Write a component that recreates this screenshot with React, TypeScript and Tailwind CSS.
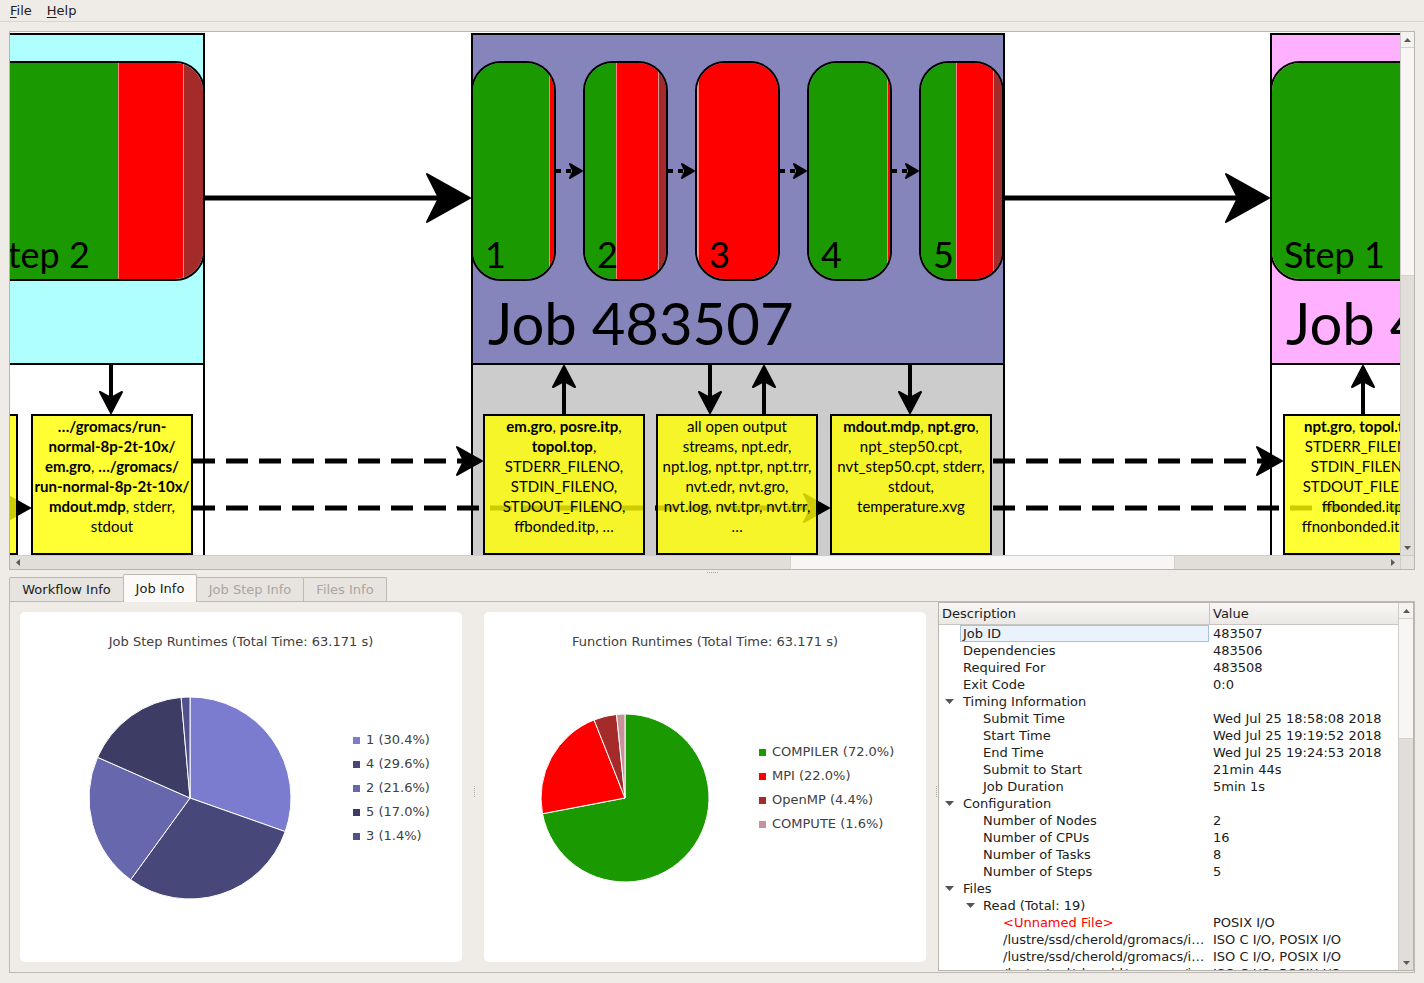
import React from 'react';

const G = '#1a9900';
const R = '#ff0000';
const BR = '#a52a2a';

type Seg = { w?: number; c: string };

function StepRect({ left, width, segs, label }: { left: number; width: number; segs: Seg[]; label: string }) {
  return (
    <div
      className="absolute top-[29px] h-[220px] rounded-[30px] border-2 border-black overflow-hidden flex"
      style={{ left, width }}
    >
      {segs.map((s, i) => (
        <div
          key={i}
          className={i > 0 ? 'h-full border-l border-[#ffffff80]' : 'h-full'}
          style={s.w === undefined ? { backgroundColor: s.c, flex: '1 1 0%' } : { backgroundColor: s.c, width: s.w, flexShrink: 0 }}
        />
      ))}
      <div className="absolute left-[12px] top-[173px] text-[36px] leading-none text-black whitespace-nowrap">{label}</div>
    </div>
  );
}

function FileBox({ left, lines }: { left: number; lines: React.ReactNode[] }) {
  return (
    <div
      className="absolute top-[382px] w-[162px] h-[141px] border-2 border-black bg-[#ffff00cc] flex flex-col items-center text-[15px] leading-[20px] text-black"
      style={{ left }}
    >
      {lines.map((l, i) => (
        <div key={i} className="whitespace-nowrap">
          {l}
        </div>
      ))}
    </div>
  );
}

type Dir = 'r' | 'l' | 'u' | 'd';
function headPts(tx: number, ty: number, dir: Dir, L: number, W: number) {
  const u = dir === 'r' ? [1, 0] : dir === 'l' ? [-1, 0] : dir === 'd' ? [0, 1] : [0, -1];
  const p = dir === 'r' || dir === 'l' ? [0, 1] : [1, 0];
  const loc = [
    [0, 0],
    [-L, -W],
    [-0.72 * L, 0],
    [-L, W],
  ];
  return loc.map(([a, b]) => `${tx + a * u[0] + b * p[0]},${ty + a * u[1] + b * p[1]}`).join(' ');
}

function Head({ x, y, dir, L, W }: { x: number; y: number; dir: Dir; L: number; W: number }) {
  return <polygon points={headPts(x, y, dir, L, W)} fill="black" stroke="black" strokeWidth={2} strokeLinejoin="round" />;
}

function Arrows() {
  const stepLefts = [461, 573, 685, 797, 909];
  const vert: { x: number; dir: Dir }[] = [
    { x: 101, dir: 'd' },
    { x: 554, dir: 'u' },
    { x: 700, dir: 'd' },
    { x: 754, dir: 'u' },
    { x: 900, dir: 'd' },
    { x: 1353, dir: 'u' },
  ];
  return (
    <svg className="absolute left-0 top-0" width={1390} height={523}>
      <line x1={195} y1={166} x2={432} y2={166} stroke="black" strokeWidth={5} />
      <Head x={460} y={166} dir="r" L={43} W={24} />
      <line x1={995} y1={166} x2={1231} y2={166} stroke="black" strokeWidth={5} />
      <Head x={1259} y={166} dir="r" L={43} W={24} />
      {stepLefts.slice(0, 4).map((l, i) => (
        <g key={i}>
          <line x1={l + 85} y1={139} x2={stepLefts[i + 1] - 9} y2={139} stroke="black" strokeWidth={4} strokeDasharray="5 5" />
          <Head x={stepLefts[i + 1] - 1} y={139} dir="r" L={12} W={7} />
        </g>
      ))}
      {vert.map((v, i) =>
        v.dir === 'd' ? (
          <g key={i}>
            <line x1={v.x} y1={333} x2={v.x} y2={367} stroke="black" strokeWidth={4} />
            <Head x={v.x} y={381} dir="d" L={21} W={11} />
          </g>
        ) : (
          <g key={i}>
            <line x1={v.x} y1={382} x2={v.x} y2={348} stroke="black" strokeWidth={4} />
            <Head x={v.x} y={334} dir="u" L={21} W={11} />
          </g>
        )
      )}
      <line x1={183} y1={429} x2={455} y2={429} stroke="black" strokeWidth={5} strokeDasharray="22 11" />
      <Head x={472} y={429} dir="r" L={25} W={14} />
      <line x1={183} y1={476} x2={802} y2={476} stroke="black" strokeWidth={5} strokeDasharray="22 11" />
      <Head x={819} y={476} dir="r" L={25} W={14} />
      <line x1={-200} y1={476} x2={3} y2={476} stroke="black" strokeWidth={5} strokeDasharray="22 11" />
      <Head x={20} y={476} dir="r" L={25} W={14} />
      <line x1={983} y1={429} x2={1255} y2={429} stroke="black" strokeWidth={5} strokeDasharray="22 11" />
      <Head x={1272} y={429} dir="r" L={25} W={14} />
      <line x1={983} y1={476} x2={1600} y2={476} stroke="black" strokeWidth={5} strokeDasharray="22 11" />
    </svg>
  );
}

function Diagram() {
  return (
    <div className="relative w-[1390px] h-[523px] overflow-hidden bg-white font-['Lato',sans-serif] text-black">
      <div className="absolute left-[-300px] top-[1px] w-[495px] h-[332px] bg-[#b0ffff] border-2 border-black" />
      <div className="absolute left-[-300px] top-[331px] w-[495px] h-[400px] bg-white border-2 border-black" />
      <div className="absolute left-[461px] top-[1px] w-[534px] h-[332px] bg-[#8585bb] border-2 border-black" />
      <div className="absolute left-[461px] top-[331px] w-[534px] h-[400px] bg-[#cccccc] border-2 border-black" />
      <div className="absolute left-[1260px] top-[1px] w-[400px] h-[332px] bg-[#ffb0ff] border-2 border-black" />
      <div className="absolute left-[1260px] top-[331px] w-[400px] h-[400px] bg-white border-2 border-black" />

      <StepRect left={-35} width={230} segs={[{ w: 141, c: G }, { w: 65, c: R }, { c: BR }]} label="Step 2" />
      <StepRect left={461} width={85} segs={[{ w: 76, c: G }, { c: R }]} label="1" />
      <StepRect left={573} width={85} segs={[{ w: 31, c: G }, { w: 42, c: R }, { c: BR }]} label="2" />
      <StepRect left={685} width={85} segs={[{ w: 1, c: '#b8b8b8' }, { c: R }]} label="3" />
      <StepRect left={797} width={85} segs={[{ w: 78, c: G }, { c: R }]} label="4" />
      <StepRect left={909} width={85} segs={[{ w: 35, c: G }, { w: 37, c: R }, { c: BR }]} label="5" />
      <StepRect left={1260} width={300} segs={[{ c: G }]} label="Step 1" />

      <div className="absolute left-[478px] top-[262px] text-[58px] leading-none whitespace-nowrap">Job 483507</div>
      <div className="absolute left-[1276px] top-[262px] text-[58px] leading-none whitespace-nowrap">Job 483508</div>

      <Arrows />

      <FileBox left={-154} lines={[]} />
      <FileBox
        left={21}
        lines={[
          <b>…/gromacs/run-</b>,
          <b>normal-8p-2t-10x/</b>,
          <>
            <b>em.gro</b>, <b>…/gromacs/</b>
          </>,
          <b>run-normal-8p-2t-10x/</b>,
          <>
            <b>mdout.mdp</b>, stderr,
          </>,
          <>stdout</>,
        ]}
      />
      <FileBox
        left={473}
        lines={[
          <>
            <b>em.gro</b>, <b>posre.itp</b>,
          </>,
          <>
            <b>topol.top</b>,
          </>,
          <>STDERR_FILENO,</>,
          <>STDIN_FILENO,</>,
          <>STDOUT_FILENO,</>,
          <>ffbonded.itp, …</>,
        ]}
      />
      <FileBox
        left={646}
        lines={[
          <>all open output</>,
          <>streams, npt.edr,</>,
          <>npt.log, npt.tpr, npt.trr,</>,
          <>nvt.edr, nvt.gro,</>,
          <>nvt.log, nvt.tpr, nvt.trr,</>,
          <>…</>,
        ]}
      />
      <FileBox
        left={820}
        lines={[
          <>
            <b>mdout.mdp</b>, <b>npt.gro</b>,
          </>,
          <>npt_step50.cpt,</>,
          <>nvt_step50.cpt, stderr,</>,
          <>stdout,</>,
          <>temperature.xvg</>,
        ]}
      />
      <FileBox
        left={1273}
        lines={[
          <>
            <b>npt.gro</b>, <b>topol.top</b>,
          </>,
          <>STDERR_FILENO,</>,
          <>STDIN_FILENO,</>,
          <>STDOUT_FILENO,</>,
          <>ffbonded.itp,</>,
          <>ffnonbonded.itp, …</>,
        ]}
      />
    </div>
  );
}

function TriUp() {
  return (
    <svg width="7" height="4" viewBox="0 0 7 4">
      <path d="M0 4 L3.5 0 L7 4 Z" fill="#5a5a5a" />
    </svg>
  );
}
function TriDown() {
  return (
    <svg width="7" height="4" viewBox="0 0 7 4">
      <path d="M0 0 L3.5 4 L7 0 Z" fill="#5a5a5a" />
    </svg>
  );
}
function TriLeft() {
  return (
    <svg width="4" height="7" viewBox="0 0 4 7">
      <path d="M4 0 L0 3.5 L4 7 Z" fill="#5a5a5a" />
    </svg>
  );
}
function TriRight() {
  return (
    <svg width="4" height="7" viewBox="0 0 4 7">
      <path d="M0 0 L4 3.5 L0 7 Z" fill="#5a5a5a" />
    </svg>
  );
}

function VScroll({ handle, className }: { handle: number; className?: string }) {
  return (
    <div className={`w-[14px] flex flex-col bg-[#e1deda] border-l border-[#d0ccc8] ${className ?? ''}`}>
      <div className="h-[15px] flex items-center justify-center bg-[#f4f3f2]">
        <TriUp />
      </div>
      <div className="bg-[#f7f6f5] border-y border-[#d6d2ce]" style={{ height: handle }} />
      <div className="flex-1" />
      <div className="h-[15px] flex items-center justify-center">
        <TriDown />
      </div>
    </div>
  );
}

function HScroll() {
  return (
    <div className="w-[1390px] h-[14px] flex bg-[#e1deda] border-t border-[#d0ccc8]">
      <div className="w-[15px] flex items-center justify-center">
        <TriLeft />
      </div>
      <div className="w-[765px]" />
      <div className="w-[385px] bg-[#f7f6f5] border-x border-[#d6d2ce]" />
      <div className="flex-1" />
      <div className="w-[15px] flex items-center justify-center">
        <TriRight />
      </div>
    </div>
  );
}

type PieDatum = { v: number; c: string };
function Pie({ r, data }: { r: number; data: PieDatum[] }) {
  const total = data.reduce((s, d) => s + d.v, 0);
  let a0 = 0;
  const cx = r + 1;
  const cy = r + 1;
  return (
    <svg width={2 * r + 2} height={2 * r + 2} className="shrink-0">
      {data.map((d, i) => {
        const a1 = a0 + (d.v / total) * Math.PI * 2;
        const x0 = cx + r * Math.sin(a0);
        const y0 = cy - r * Math.cos(a0);
        const x1 = cx + r * Math.sin(a1);
        const y1 = cy - r * Math.cos(a1);
        const large = a1 - a0 > Math.PI ? 1 : 0;
        const path = `M${cx},${cy} L${x0},${y0} A${r},${r} 0 ${large} 1 ${x1},${y1} Z`;
        a0 = a1;
        return <path key={i} d={path} fill={d.c} stroke="white" strokeWidth={1} strokeLinejoin="round" />;
      })}
    </svg>
  );
}

function Legend({ items }: { items: { label: string; c: string }[] }) {
  return (
    <div className="flex flex-col">
      {items.map((it, i) => (
        <div key={i} className="h-[24px] flex items-center text-[13px] text-[#404040] whitespace-nowrap">
          <div className="w-[7px] h-[7px] mr-[6px]" style={{ backgroundColor: it.c }} />
          {it.label}
        </div>
      ))}
    </div>
  );
}

const pie1 = [
  { v: 30.4, c: '#7b7bd0', label: '1 (30.4%)' },
  { v: 29.6, c: '#474779', label: '4 (29.6%)' },
  { v: 21.6, c: '#6767ad', label: '2 (21.6%)' },
  { v: 17.0, c: '#3c3c65', label: '5 (17.0%)' },
  { v: 1.4, c: '#51518e', label: '3 (1.4%)' },
];
const pie2 = [
  { v: 72.0, c: '#1a9900', label: 'COMPILER (72.0%)' },
  { v: 22.0, c: '#ff0000', label: 'MPI (22.0%)' },
  { v: 4.4, c: '#a52a2a', label: 'OpenMP (4.4%)' },
  { v: 1.6, c: '#c8929c', label: 'COMPUTE (1.6%)' },
];

function ChartCard({
  title,
  data,
  r,
  pieMl,
  pieMt,
  legMl,
  legMt,
}: {
  title: string;
  data: { v: number; c: string; label: string }[];
  r: number;
  pieMl: string;
  pieMt: string;
  legMl: string;
  legMt: string;
}) {
  return (
    <div className="w-[442px] h-[350px] bg-white rounded-[5px] flex flex-col">
      <div className="mt-[22px] h-[16px] leading-[16px] text-center text-[13px] text-[#404040]">{title}</div>
      <div className="flex items-start">
        <div className={`${pieMl} ${pieMt}`}>
          <Pie r={r} data={data} />
        </div>
        <div className={`${legMl} ${legMt}`}>
          <Legend items={data} />
        </div>
      </div>
    </div>
  );
}

type Row = { lvl: 0 | 1 | 2; label: string; value?: string; exp?: boolean; red?: boolean; sel?: boolean };
const rows: Row[] = [
  { lvl: 0, label: 'Job ID', value: '483507', sel: true },
  { lvl: 0, label: 'Dependencies', value: '483506' },
  { lvl: 0, label: 'Required For', value: '483508' },
  { lvl: 0, label: 'Exit Code', value: '0:0' },
  { lvl: 0, label: 'Timing Information', exp: true },
  { lvl: 1, label: 'Submit Time', value: 'Wed Jul 25 18:58:08 2018' },
  { lvl: 1, label: 'Start Time', value: 'Wed Jul 25 19:19:52 2018' },
  { lvl: 1, label: 'End Time', value: 'Wed Jul 25 19:24:53 2018' },
  { lvl: 1, label: 'Submit to Start', value: '21min 44s' },
  { lvl: 1, label: 'Job Duration', value: '5min 1s' },
  { lvl: 0, label: 'Configuration', exp: true },
  { lvl: 1, label: 'Number of Nodes', value: '2' },
  { lvl: 1, label: 'Number of CPUs', value: '16' },
  { lvl: 1, label: 'Number of Tasks', value: '8' },
  { lvl: 1, label: 'Number of Steps', value: '5' },
  { lvl: 0, label: 'Files', exp: true },
  { lvl: 1, label: 'Read (Total: 19)', exp: true },
  { lvl: 2, label: '<Unnamed File>', value: 'POSIX I/O', red: true },
  { lvl: 2, label: '/lustre/ssd/cherold/gromacs/i…', value: 'ISO C I/O, POSIX I/O' },
  { lvl: 2, label: '/lustre/ssd/cherold/gromacs/i…', value: 'ISO C I/O, POSIX I/O' },
  { lvl: 2, label: '/lustre/ssd/cherold/gromacs/i…', value: 'ISO C I/O, POSIX I/O' },
];
const padCls = ['pl-[24px]', 'pl-[44px]', 'pl-[64px]'];
const triCls = ['left-[6px]', 'left-[27px]', 'left-[47px]'];

function Tree() {
  return (
    <div className="flex-1 h-[369px] border border-[#b8b4b0] bg-white flex">
      <div className="flex-1 flex flex-col overflow-hidden">
        <div className="h-[22px] shrink-0 flex border-b border-[#c8c4c0] bg-[linear-gradient(#f8f7f6,#ebe8e5)]">
          <div className="w-[271px] border-r border-[#c8c4c0] pl-[3px] flex items-center">Description</div>
          <div className="pl-[3px] flex items-center">Value</div>
        </div>
        <div className="flex-1 overflow-hidden">
          {rows.map((r, i) => (
            <div key={i} className="h-[17px] flex items-center whitespace-nowrap">
              <div className="w-[271px] shrink-0 h-full relative flex items-center">
                {r.sel && <div className="absolute left-[21px] right-[1px] top-0 bottom-0 bg-[#eaf2fb] border border-[#a3c3e3]" />}
                {r.exp && (
                  <div className={`absolute top-[6px] ${triCls[r.lvl]}`}>
                    <svg width="9" height="5" viewBox="0 0 9 5">
                      <path d="M0 0 L9 0 L4.5 5 Z" fill="#555" />
                    </svg>
                  </div>
                )}
                <span className={`relative ${padCls[r.lvl]} ${r.red ? 'text-[#ff0000]' : ''}`}>{r.label}</span>
              </div>
              <div className="pl-[3px]">{r.value}</div>
            </div>
          ))}
        </div>
      </div>
      <VScroll handle={121} className="w-[15px] shrink-0" />
    </div>
  );
}

function Tab({ label, w, sel, disabled }: { label: string; w: string; sel?: boolean; disabled?: boolean }) {
  return (
    <div
      className={`${w} -mr-px flex items-center justify-center border border-[#bcb8b4] rounded-t-[2px] ${
        sel ? 'h-[28px] bg-[#fbfaf9] border-b-0 relative z-10 mb-[-1px]' : 'h-[24px] bg-[#e7e3df] border-b-0'
      } ${disabled ? 'text-[#aaa6a2]' : 'text-[#202020]'}`}
    >
      {label}
    </div>
  );
}

export default function App() {
  return (
    <div className="w-[1424px] h-[983px] bg-[#efebe7] font-['DejaVu_Sans',sans-serif] text-[13px] text-[#202020] overflow-hidden flex flex-col">
      <div className="h-[22px] border-b border-[#d8d4d0] flex items-center pl-[10px] gap-[15px] shrink-0">
        <span>
          <span className="underline underline-offset-2">F</span>ile
        </span>
        <span>
          <span className="underline underline-offset-2">H</span>elp
        </span>
      </div>
      <div className="ml-[9px] mt-[9px] w-[1406px] h-[539px] border border-[#b8b4b0] flex flex-col shrink-0">
        <div className="flex h-[523px]">
          <Diagram />
          <VScroll handle={229} />
        </div>
        <div className="flex h-[14px]">
          <HScroll />
          <div className="w-[14px] bg-[#e6e3df] border-t border-l border-[#d0ccc8]" />
        </div>
      </div>
      <div className="h-[5px] flex items-center justify-center gap-[1px] shrink-0">
        {[0, 1, 2, 3, 4, 5].map((i) => (
          <div key={i} className="w-[1px] h-[1px] bg-[#a8a4a0]" />
        ))}
      </div>
      <div className="ml-[9px] w-[1406px] flex flex-col shrink-0">
        <div className="h-[26px] flex items-end">
          <Tab label="Workflow Info" w="w-[115px]" />
          <Tab label="Job Info" w="w-[74px]" sel />
          <Tab label="Job Step Info" w="w-[108px]" disabled />
          <Tab label="Files Info" w="w-[84px]" disabled />
        </div>
        <div className="h-[372px] border border-[#bcb8b4] bg-[#efebe7] flex">
          <div className="w-[460px] pl-[10px] pr-[8px] pt-[10px]">
            <ChartCard
              title="Job Step Runtimes (Total Time: 63.171 s)"
              data={pie1}
              r={101}
              pieMl="ml-[68px]"
              pieMt="mt-[46px]"
              legMl="ml-[61px]"
              legMt="mt-[78px]"
            />
          </div>
          <div className="w-[8px] flex flex-col items-center justify-center gap-[1px] pt-[8px]">
            {[0, 1, 2, 3, 4, 5].map((i) => (
              <div key={i} className="w-[1px] h-[1px] bg-[#b0aca8]" />
            ))}
          </div>
          <div className="w-[456px] pl-[6px] pr-[8px] pt-[10px]">
            <ChartCard
              title="Function Runtimes (Total Time: 63.171 s)"
              data={pie2}
              r={84}
              pieMl="ml-[56px]"
              pieMt="mt-[63px]"
              legMl="ml-[49px]"
              legMt="mt-[90px]"
            />
          </div>
          <div className="w-[4px] flex flex-col items-center justify-center gap-[1px] pt-[8px]">
            {[0, 1, 2, 3, 4, 5].map((i) => (
              <div key={i} className="w-[1px] h-[1px] bg-[#b0aca8]" />
            ))}
          </div>
          <Tree />
        </div>
      </div>
    </div>
  );
}
